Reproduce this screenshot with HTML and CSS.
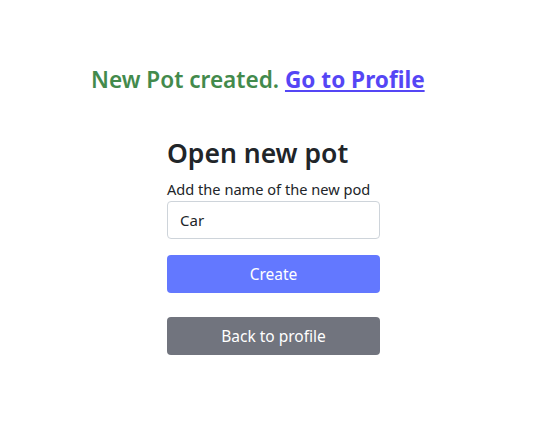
FILE: index.html
```html
<!DOCTYPE html>
<html>
<head>
<meta charset="utf-8">
<link rel="stylesheet" href="styles.css">
</head>
<body>
<div class="page">
  <p class="notice">New Pot created. <a class="notice-link" href="#">Go to Profile</a></p>
  <form class="pot-form">
    <h3 class="title">Open new pot</h3>
    <label class="label" for="name">Add the name of the new pod</label>
    <input class="input" id="name" type="text" value="Car">
    <button class="btn btn-primary" type="button">Create</button>
    <button class="btn btn-secondary" type="button">Back to profile</button>
  </form>
</div>
</body>
</html>
```
FILE: styles.css
```css
html, body {
  margin: 0;
  padding: 0;
  background: #fff;
}
body {
  font-family: "Noto Sans", "Open Sans", sans-serif;
  color: #212529;
}
.page {
  display: flex;
  flex-direction: column;
  padding-top: 64px;
}
.notice {
  margin: 0 0 0 91px;
  font-size: 22.6px;
  font-weight: 600;
  color: #438a4c;
  line-height: 32px;
}
.notice-link {
  color: #5546f5;
  font-weight: 700;
  text-decoration: underline;
}
.pot-form {
  align-self: center;
  width: 213px;
  display: flex;
  flex-direction: column;
  margin-top: 39px;
}
.title {
  margin: 0 0 6px;
  font-size: 26.5px;
  font-weight: 600;
  line-height: 36px;
  color: #212529;
}
.label {
  font-size: 14.6px;
  line-height: 24px;
}
.input {
  box-sizing: border-box;
  height: 38px;
  border: 1px solid #ced4da;
  border-radius: 4px;
  padding: 0 12px;
  font-family: inherit;
  font-size: 15px;
  color: #212529;
}
.btn {
  box-sizing: border-box;
  height: 38px;
  border: none;
  border-radius: 4px;
  color: #fff;
  font-family: inherit;
  font-size: 15.5px;
}
.btn-primary {
  background: #6378ff;
  margin-top: 16px;
}
.btn-secondary {
  background: #71747e;
  margin-top: 24px;
}
```
